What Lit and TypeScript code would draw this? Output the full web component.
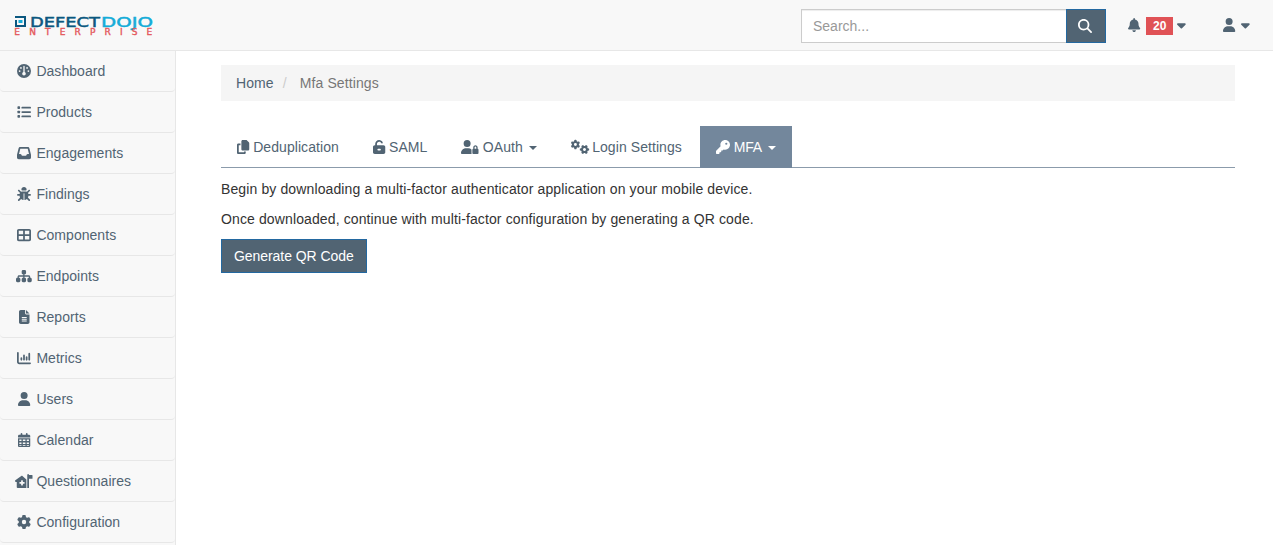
import { LitElement, html, svg, css } from "lit";
import { customElement, property } from "lit/decorators.js";

const GEAR =
  "M495.9 166.6c3.2 8.7 .5 18.4-6.4 24.6l-43.3 39.4c1.1 8.3 1.7 16.8 1.7 25.4s-.6 17.1-1.7 25.4l43.3 39.4c6.9 6.2 9.6 15.9 6.4 24.6c-4.4 11.9-9.7 23.3-15.8 34.3l-4.7 8.1c-6.6 11-14 21.4-22.1 31.2c-5.9 7.2-15.7 9.6-24.5 6.8l-55.7-17.7c-13.4 10.3-28.2 18.9-44 25.4l-12.5 57.1c-2 9.1-9 16.3-18.2 17.8c-13.8 2.3-28 3.5-42.5 3.5s-28.7-1.2-42.5-3.5c-9.2-1.5-16.2-8.7-18.2-17.8l-12.5-57.1c-15.8-6.5-30.6-15.1-44-25.4L83.1 425.9c-8.8 2.8-18.6 .3-24.5-6.8c-8.1-9.8-15.5-20.2-22.1-31.2l-4.7-8.1c-6.1-11-11.4-22.4-15.8-34.3c-3.2-8.7-.5-18.4 6.4-24.6l43.3-39.4C64.6 273.1 64 264.6 64 256s.6-17.1 1.7-25.4L22.4 191.2c-6.9-6.2-9.6-15.9-6.4-24.6c4.4-11.9 9.7-23.3 15.8-34.3l4.7-8.1c6.6-11 14-21.4 22.1-31.2c5.9-7.2 15.7-9.6 24.5-6.8l55.7 17.7c13.4-10.3 28.2-18.9 44-25.4l12.5-57.1c2-9.1 9-16.3 18.2-17.8C227.3 1.2 241.5 0 256 0s28.7 1.2 42.5 3.5c9.2 1.5 16.2 8.7 18.2 17.8l12.5 57.1c15.8 6.5 30.6 15.1 44 25.4l55.7-17.7c8.8-2.8 18.6-.3 24.5 6.8c8.1 9.8 15.5 20.2 22.1 31.2l4.7 8.1c6.1 11 11.4 22.4 15.8 34.3zM256 336a80 80 0 1 0 0-160 80 80 0 1 0 0 160z";

const p = (d: string) => svg`<path d=${d}/>`;

/* name -> [viewBox width on a 512 high em square, shape] */
const ICONS: Record<string, [number, unknown]> = {
  search: [512, p("M416 208c0 45.9-14.9 88.3-40 122.7L502.6 457.4c12.5 12.5 12.5 32.8 0 45.3s-32.8 12.5-45.3 0L330.7 376c-34.4 25.2-76.8 40-122.7 40C93.1 416 0 322.9 0 208S93.1 0 208 0S416 93.1 416 208zM208 352a144 144 0 1 0 0-288 144 144 0 1 0 0 288z")],
  bell: [448, p("M224 0c-17.7 0-32 14.3-32 32V51.2C119 66 64 130.6 64 208v18.8c0 47-17.3 92.4-48.5 127.6l-7.4 8.3c-8.4 9.4-10.4 22.9-5.3 34.4S19.4 416 32 416H416c12.6 0 24-7.4 29.2-18.9s3.1-25-5.3-34.4l-7.4-8.3C401.3 319.2 384 273.9 384 226.8V208c0-77.4-55-142-128-156.8V32c0-17.7-14.3-32-32-32zm45.3 493.3c12-12 18.7-28.3 18.7-45.3H224 160c0 17 6.7 33.3 18.7 45.3s28.3 18.7 45.3 18.7s33.3-6.7 45.3-18.7z")],
  caret: [320, p("M137.4 374.6c12.5 12.5 32.8 12.5 45.3 0l128-128c9.2-9.2 11.9-22.9 6.9-34.9s-16.6-19.8-29.6-19.8L32 192c-12.9 0-24.6 7.8-29.6 19.8s-2.2 25.7 6.9 34.9l128 128z")],
  user: [448, p("M224 256A128 128 0 1 0 224 0a128 128 0 1 0 0 256zm-45.7 48C79.8 304 0 383.8 0 482.3C0 498.7 13.3 512 29.7 512H418.3c16.4 0 29.7-13.3 29.7-29.7C448 383.8 368.2 304 269.7 304H178.3z")],
  gauge: [512, p("M0 256a256 256 0 1 1 512 0A256 256 0 1 1 0 256zm320 96c0-26.9-16.5-49.9-40-59.3V88c0-13.3-10.7-24-24-24s-24 10.7-24 24V292.7c-23.5 9.5-40 32.5-40 59.3c0 35.3 28.7 64 64 64s64-28.7 64-64zM144 176a32 32 0 1 0 0-64 32 32 0 1 0 0 64zm-16 80a32 32 0 1 0 -64 0 32 32 0 1 0 64 0zm288 32a32 32 0 1 0 0-64 32 32 0 1 0 0 64zM400 144a32 32 0 1 0 -64 0 32 32 0 1 0 64 0z")],
  list: [512, svg`<rect x="16" y="48" width="96" height="96" rx="24"/><rect x="16" y="208" width="96" height="96" rx="24"/><rect x="16" y="368" width="96" height="96" rx="24"/><rect x="160" y="64" width="352" height="64" rx="32"/><rect x="160" y="224" width="352" height="64" rx="32"/><rect x="160" y="384" width="352" height="64" rx="32"/>`],
  inbox: [512, p("M121 32C91.6 32 66 52 58.9 80.5L1.9 308.4C.6 313.5 0 318.7 0 323.9V416c0 35.3 28.7 64 64 64H448c35.3 0 64-28.7 64-64V323.9c0-5.2-.6-10.4-1.9-15.5l-57-227.9C446 52 420.4 32 391 32H121zm0 64H391l48 192H387.8c-12.1 0-23.2 6.8-28.6 17.7l-14.3 28.6c-5.4 10.8-16.5 17.7-28.6 17.7H195.8c-12.1 0-23.2-6.8-28.6-17.7l-14.3-28.6c-5.4-10.8-16.5-17.7-28.6-17.7H73L121 96z")],
  bug: [512, p("M256 0c53 0 96 43 96 96v3.6c0 15.7-12.7 28.4-28.4 28.4H188.4c-15.7 0-28.4-12.7-28.4-28.4V96c0-53 43-96 96-96zM41.4 105.4c12.5-12.5 32.8-12.5 45.3 0l64 64c.7 .7 1.3 1.4 1.9 2.1c14.2-7.3 30.4-11.4 47.5-11.4H312c17.1 0 33.2 4.1 47.5 11.4c.6-.7 1.2-1.4 1.9-2.1l64-64c12.5-12.5 32.8-12.5 45.3 0s12.5 32.8 0 45.3l-64 64c-.7 .7-1.4 1.3-2.1 1.9c6.2 12 10.1 25.3 11.1 39.5H480c17.7 0 32 14.3 32 32s-14.3 32-32 32H416c0 24.6-5.5 47.8-15.4 68.6c2.2 1.3 4.2 2.9 6 4.8l64 64c12.5 12.5 12.5 32.8 0 45.3s-32.8 12.5-45.3 0l-63.1-63.1c-24.5 21.8-55.8 36.2-90.3 39.6V240c0-8.8-7.2-16-16-16s-16 7.2-16 16V479.2c-34.5-3.4-65.8-17.8-90.3-39.6L86.6 502.6c-12.5 12.5-32.8 12.5-45.3 0s-12.5-32.8 0-45.3l64-64c1.9-1.9 3.9-3.4 6-4.8C101.5 367.8 96 344.6 96 320H32c-17.7 0-32-14.3-32-32s14.3-32 32-32H96.3c1.1-14.1 5-27.5 11.1-39.5c-.7-.6-1.4-1.2-2.1-1.9l-64-64c-12.5-12.5-12.5-32.8 0-45.3z")],
  table: [512, p("M448 96V224H288V96H448zm0 192V416H288V288H448zM224 224H64V96H224V224zM64 288H224V416H64V288zM64 32C28.7 32 0 60.7 0 96V416c0 35.3 28.7 64 64 64H448c35.3 0 64-28.7 64-64V96c0-35.3-28.7-64-64-64H64z")],
  sitemap: [576, p("M208 80c0-26.5 21.5-48 48-48h64c26.5 0 48 21.5 48 48v64c0 26.5-21.5 48-48 48h-8v40H464c30.9 0 56 25.1 56 56v32h8c26.5 0 48 21.5 48 48v64c0 26.5-21.5 48-48 48H464c-26.5 0-48-21.5-48-48V368c0-26.5 21.5-48 48-48h8V288c0-4.4-3.6-8-8-8H312v40h8c26.5 0 48 21.5 48 48v64c0 26.5-21.5 48-48 48H256c-26.5 0-48-21.5-48-48V368c0-26.5 21.5-48 48-48h8V280H112c-4.4 0-8 3.6-8 8v32h8c26.5 0 48 21.5 48 48v64c0 26.5-21.5 48-48 48H48c-26.5 0-48-21.5-48-48V368c0-26.5 21.5-48 48-48h8V288c0-30.9 25.1-56 56-56H264V192h-8c-26.5 0-48-21.5-48-48V80z")],
  file: [384, p("M64 0C28.7 0 0 28.7 0 64V448c0 35.3 28.7 64 64 64H320c35.3 0 64-28.7 64-64V160H256c-17.7 0-32-14.3-32-32V0H64zM256 0V128H384L256 0zM112 256H272c8.8 0 16 7.2 16 16s-7.2 16-16 16H112c-8.8 0-16-7.2-16-16s7.2-16 16-16zm0 64H272c8.8 0 16 7.2 16 16s-7.2 16-16 16H112c-8.8 0-16-7.2-16-16s7.2-16 16-16zm0 64H272c8.8 0 16 7.2 16 16s-7.2 16-16 16H112c-8.8 0-16-7.2-16-16s7.2-16 16-16z")],
  chart: [512, p("M32 32c17.7 0 32 14.3 32 32V400c0 8.8 7.2 16 16 16H480c17.7 0 32 14.3 32 32s-14.3 32-32 32H80c-44.2 0-80-35.8-80-80V64C0 46.3 14.3 32 32 32zM160 224c17.7 0 32 14.3 32 32v64c0 17.7-14.3 32-32 32s-32-14.3-32-32V256c0-17.7 14.3-32 32-32zm128-64V320c0 17.7-14.3 32-32 32s-32-14.3-32-32V160c0-17.7 14.3-32 32-32s32 14.3 32 32zm64 32c17.7 0 32 14.3 32 32v96c0 17.7-14.3 32-32 32s-32-14.3-32-32V224c0-17.7 14.3-32 32-32zM480 96V320c0 17.7-14.3 32-32 32s-32-14.3-32-32V96c0-17.7 14.3-32 32-32s32 14.3 32 32z")],
  calendar: [448, p("M128 0c17.7 0 32 14.3 32 32V64H288V32c0-17.7 14.3-32 32-32s32 14.3 32 32V64h48c26.5 0 48 21.5 48 48v48H0V112C0 85.5 21.5 64 48 64H96V32c0-17.7 14.3-32 32-32zM0 192H448V464c0 26.5-21.5 48-48 48H48c-26.5 0-48-21.5-48-48V192zM48 240v56h80v-56zM176 240v56h96v-56zM320 240v56h80v-56zM48 344v56h80v-56zM176 344v56h96v-56zM320 344v56h80v-56zM48 440v24h80v-24zM176 440v24h96v-24zM320 440v24h80v-24z")],
  house: [640, p("M480 0c17.7 0 32 14.3 32 32h112c9 0 16 7 16 16v112c0 9-7 16-16 16H512V512H448V32c0-17.7 14.3-32 32-32zM230 74c12-10 30-10 42 0L416 200V512H96c-18 0-32-14-32-32V288H32c-13 0-25-8-30-21s-1-26 9-35zM224 240v48h-48c-9 0-16 7-16 16v32c0 9 7 16 16 16h48v48c0 9 7 16 16 16h32c9 0 16-7 16-16v-48h48c9 0 16-7 16-16v-32c0-9-7-16-16-16h-48v-48c0-9-7-16-16-16h-32c-9 0-16 7-16 16z")],
  gear: [512, p(GEAR)],
  gears: [640, svg`<path transform="translate(-10 -6) scale(.67)" d=${GEAR}/><path transform="translate(322 176) rotate(30 171 171) scale(.67)" d=${GEAR}/>`],
  copy: [448, p("M208 0H332.1c12.7 0 24.9 5.1 33.9 14.1l67.9 67.9c9 9 14.1 21.2 14.1 33.9V336c0 26.5-21.5 48-48 48H208c-26.5 0-48-21.5-48-48V48c0-26.5 21.5-48 48-48zM48 128h80v64H64V448H256V416h64v48c0 26.5-21.5 48-48 48H48c-26.5 0-48-21.5-48-48V176c0-26.5 21.5-48 48-48z")],
  unlock: [448, p("M224 64c-44.2 0-80 35.8-80 80v48H384c35.3 0 64 28.7 64 64V448c0 35.3-28.7 64-64 64H64c-35.3 0-64-28.7-64-64V256c0-35.3 28.7-64 64-64H80V144C80 64.5 144.5 0 224 0c57.5 0 107 33.7 130.1 82.3c7.6 16 .8 35.1-15.2 42.6s-35.1 .8-42.6-15.2C283.4 82.6 255.9 64 224 64zm32 320c17.7 0 32-14.3 32-32s-14.3-32-32-32H192c-17.7 0-32 14.3-32 32s14.3 32 32 32h64z")],
  userlock: [640, p("M224 256A128 128 0 1 0 224 0a128 128 0 1 0 0 256zm-45.7 48C79.8 304 0 383.8 0 482.3C0 498.7 13.3 512 29.7 512H392.6c-5.4-9.4-8.6-20.3-8.6-32V352c0-2.1 .1-4.2 .3-6.3c-31-26-71-41.7-114.6-41.7H178.3zM528 240c17.7 0 32 14.3 32 32v48H496V272c0-17.7 14.3-32 32-32zm-80 32v48c-17.7 0-32 14.3-32 32V480c0 17.7 14.3 32 32 32H608c17.7 0 32-14.3 32-32V352c0-17.7-14.3-32-32-32V272c0-44.2-35.8-80-80-80s-80 35.8-80 80z")],
  key: [512, p("M336 352c97.2 0 176-78.8 176-176S433.2 0 336 0S160 78.8 160 176c0 18.7 2.9 36.8 8.3 53.7L7 391c-4.5 4.5-7 10.6-7 17v80c0 13.3 10.7 24 24 24h80c13.3 0 24-10.7 24-24V448h40c13.3 0 24-10.7 24-24V384h40c6.4 0 12.5-2.5 17-7l33.3-33.3c16.9 5.4 35 8.3 53.7 8.3zM376 96a40 40 0 1 1 0 80 40 40 0 1 1 0-80z")],
};

@customElement("fa-icon")
export class FaIcon extends LitElement {
  @property() name = "";
  static styles = css`
    :host { display: inline-flex; flex: none; justify-content: center; align-items: center; }
    svg { display: block; height: 14px; fill: currentColor; fill-rule: evenodd; overflow: visible; }
  `;
  render() {
    const [w, shape] = ICONS[this.name];
    return html`<svg viewBox="0 0 ${w} 512" width=${(w / 512) * 14}>${shape}</svg>`;
  }
}

const MENU: [string, string][] = [
  ["gauge", "Dashboard"],
  ["list", "Products"],
  ["inbox", "Engagements"],
  ["bug", "Findings"],
  ["table", "Components"],
  ["sitemap", "Endpoints"],
  ["file", "Reports"],
  ["chart", "Metrics"],
  ["user", "Users"],
  ["calendar", "Calendar"],
  ["house", "Questionnaires"],
  ["gear", "Configuration"],
];

const TABS = [
  { icon: "copy", label: "Deduplication" },
  { icon: "unlock", label: "SAML" },
  { icon: "userlock", label: "OAuth", menu: true },
  { icon: "gears", label: "Login Settings" },
  { icon: "key", label: "MFA", menu: true, active: true },
];

@customElement("app-root")
export class AppRoot extends LitElement {
  static styles = css`
    :host {
      display: flex; flex-direction: column; height: 545px; overflow: hidden;
      box-sizing: border-box; background: #fff; color: #333;
      font: 14px/20px "Liberation Sans", Arial, sans-serif;
    }
    * { box-sizing: border-box; }
    a { color: #516473; text-decoration: none; }
    .top {
      flex: none; display: flex; align-items: center; height: 51px; padding: 0 23px 0 14px;
      background: #f8f8f8; border-bottom: 1px solid #e7e7e7; color: #516473;
    }
    .logo { display: block; width: 140px; height: 24px; margin-right: auto; }
    .search { display: flex; width: 305px; height: 34px; margin-top: 2px; }
    .field {
      flex: 1; min-width: 0; height: 34px; padding: 6px 11px; border: 1px solid #ccc; border-right: 0;
      border-radius: 0; outline: 0; background: #fff; font: inherit; color: #555;
      box-shadow: inset 0 1px 1px rgba(0, 0, 0, .075);
    }
    .field::placeholder { color: #999; opacity: 1; }
    .go {
      display: flex; align-items: center; justify-content: center; width: 40px; padding: 0 2px 0 0;
      background: #516473; border: 1px solid #2368a0; color: #fff;
    }
    .alerts { display: flex; align-items: center; margin-left: 21.5px; }
    .badge {
      margin: 2px 4px 0 6.5px; width: 27px; height: 18px; background: #e05256; color: #fff;
      font-weight: 700; font-size: 12px; line-height: 18px; text-align: center;
    }
    .me { display: flex; align-items: center; gap: 6.5px; margin-left: 36.5px; }
    .body { display: flex; flex: 1; min-height: 0; }
    .side { flex: none; width: 176px; background: #f8f8f8; border-right: 1px solid #e7e7e7; overflow: hidden; }
    .item {
      display: flex; align-items: center; height: 41px; padding-left: 15px;
      border-bottom: 1px solid #e7e7e7; border-radius: 4px; letter-spacing: .04px;
    }
    .item fa-icon { width: 17.5px; margin-right: 3.9px; }
    .main { flex: 1; padding: 14px 38px 0 45px; }
    .crumbs { display: flex; height: 36px; padding: 8px 15px; background: #f5f5f5; color: #777; letter-spacing: .1px; }
    .slash { color: #ccc; padding: 0 13px 0 9px; }
    .tabs { display: flex; height: 42px; margin: 25px 0 0; gap: 2px; border-bottom: 1px solid #8b9bab; }
    .tab { display: flex; align-items: center; height: 42px; padding: 0 16px; letter-spacing: .07px; }
    .tab fa-icon { margin-right: 3.9px; }
    .active { background: #73879c; color: #fff; letter-spacing: -.2px; }
    .caret {
      width: 8px; height: 4px; margin: 2px 0 0 5.9px;
      border-top: 4px solid; border-left: 4px solid transparent; border-right: 4px solid transparent;
    }
    .text { margin: 0 0 10px; letter-spacing: .12px; }
    .tabs + .text { margin-top: 11px; }
    .cta {
      height: 34px; padding: 0 12px; border: 1px solid #2368a0; border-radius: 0;
      background: #516473; color: #fff; font: inherit; letter-spacing: -.06px;
    }
  `;

  render() {
    return html`
      <header class="top">
        <svg class="logo" viewBox="0 0 140 24" role="img" aria-label="DefectDojo Enterprise">
          <path d="M1 4H11V13H2V7" fill="none" stroke="#0b5880" stroke-width="2"/>
          <rect x="4.5" y="7" width="4" height="3" fill="#15acd8"/>
          <g font-family="DejaVu Sans, sans-serif">
            <text x="16" y="13.7" font-size="14.5" textLength="70" lengthAdjust="spacingAndGlyphs" fill="#0b5880" stroke="#0b5880" stroke-width=".5">DEFECT</text>
            <text x="87" y="13.7" font-size="14.5" textLength="52" lengthAdjust="spacingAndGlyphs" fill="#15acd8" stroke="#15acd8" stroke-width=".5">DOJO</text>
            <text x="0.3" y="22" font-size="9" textLength="138" fill="#e4595c" stroke="#e4595c" stroke-width=".4">ENTERPRISE</text>
          </g>
        </svg>
        <div class="search">
          <input class="field" placeholder="Search..." />
          <button class="go" aria-label="Search"><fa-icon name="search"></fa-icon></button>
        </div>
        <div class="alerts">
          <fa-icon name="bell"></fa-icon><span class="badge">20</span><fa-icon name="caret"></fa-icon>
        </div>
        <div class="me"><fa-icon name="user"></fa-icon><fa-icon name="caret"></fa-icon></div>
      </header>
      <div class="body">
        <nav class="side">
          ${MENU.map(([icon, label]) => html`<a class="item"><fa-icon name=${icon}></fa-icon>${label}</a>`)}
        </nav>
        <main class="main">
          <div class="crumbs"><a>Home</a><span class="slash">/</span><span>Mfa Settings</span></div>
          <div class="tabs">
            ${TABS.map(
              (t) => html`<a class="tab ${t.active ? "active" : ""}"
                ><fa-icon name=${t.icon}></fa-icon>${t.label}${t.menu ? html`<span class="caret"></span>` : ""}</a>`
            )}
          </div>
          <p class="text">Begin by downloading a multi-factor authenticator application on your mobile device.</p>
          <p class="text">Once downloaded, continue with multi-factor configuration by generating a QR code.</p>
          <button class="cta">Generate QR Code</button>
        </main>
      </div>
    `;
  }
}
